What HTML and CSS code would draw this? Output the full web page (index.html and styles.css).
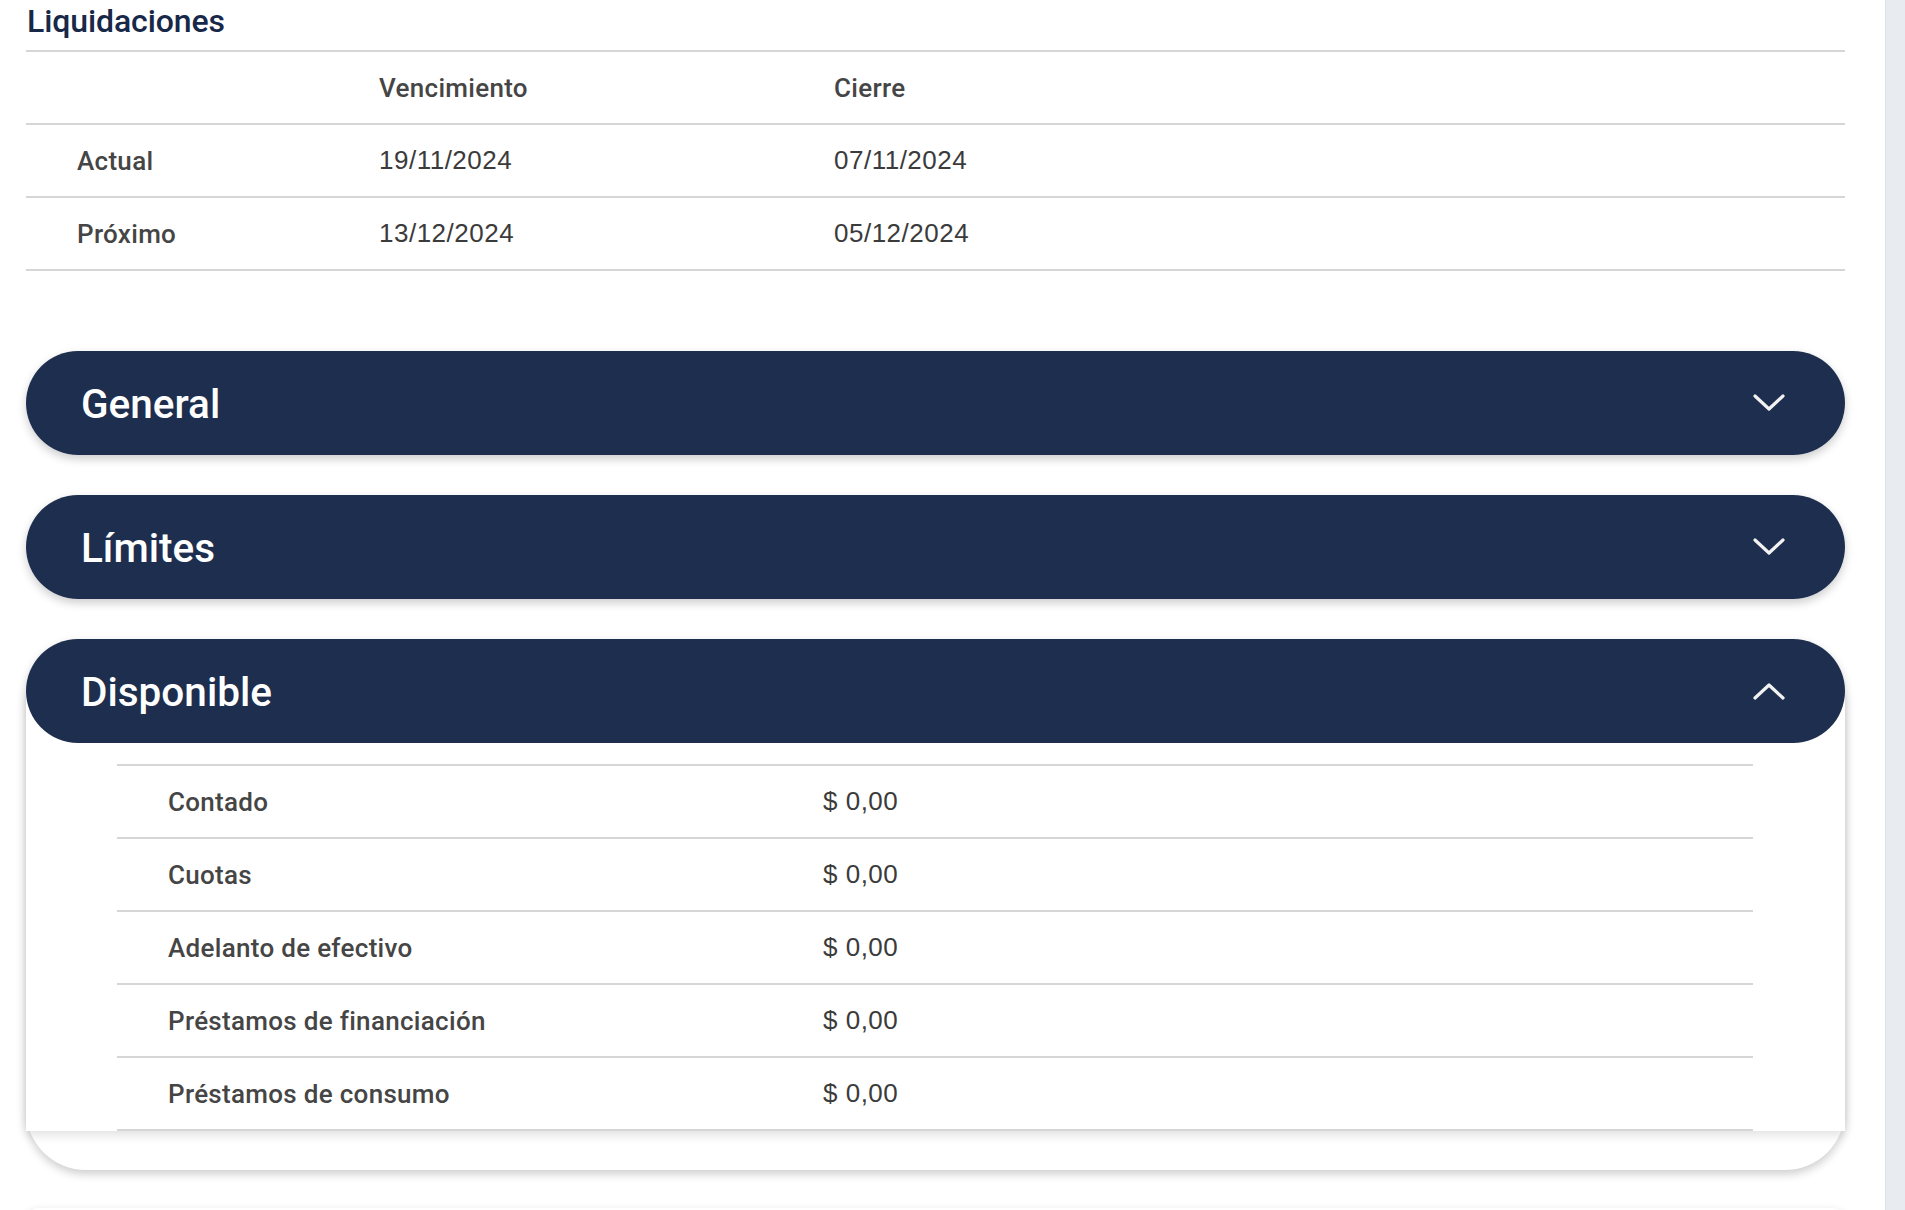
FILE: index.html
```html
<!DOCTYPE html>
<html lang="es">
<head>
<meta charset="utf-8">
<title>Liquidaciones</title>
<link rel="stylesheet" href="styles.css">
</head>
<body>
<div class="page">
  <main class="main">
    <h2 class="title">Liquidaciones</h2>
    <div class="liq-table">
      <div class="liq-row liq-head">
        <span class="cell label"></span>
        <span class="cell label">Vencimiento</span>
        <span class="cell label">Cierre</span>
      </div>
      <div class="liq-row">
        <span class="cell label">Actual</span>
        <span class="cell value">19/11/2024</span>
        <span class="cell value">07/11/2024</span>
      </div>
      <div class="liq-row">
        <span class="cell label">Próximo</span>
        <span class="cell value">13/12/2024</span>
        <span class="cell value">05/12/2024</span>
      </div>
    </div>

    <div class="accordions">
      <div class="acc">
        <div class="acc-head">
          <span class="acc-title">General</span>
          <svg class="chev" width="32" height="20" viewBox="0 0 32 20"><polyline points="2,3 16,16 30,3" fill="none" stroke="#f2f2f2" stroke-width="3.2" stroke-linecap="round" stroke-linejoin="round"/></svg>
        </div>
      </div>
      <div class="acc">
        <div class="acc-head">
          <span class="acc-title">Límites</span>
          <svg class="chev" width="32" height="20" viewBox="0 0 32 20"><polyline points="2,3 16,16 30,3" fill="none" stroke="#f2f2f2" stroke-width="3.2" stroke-linecap="round" stroke-linejoin="round"/></svg>
        </div>
      </div>
      <div class="acc acc-open">
        <div class="acc-head">
          <span class="acc-title">Disponible</span>
          <svg class="chev" width="32" height="20" viewBox="0 0 32 20"><polyline points="2,17 16,4 30,17" fill="none" stroke="#f2f2f2" stroke-width="3.2" stroke-linecap="round" stroke-linejoin="round"/></svg>
        </div>
        <div class="acc-body">
          <div class="disp-table">
            <div class="disp-row"><span class="cell label">Contado</span><span class="cell value">$ 0,00</span></div>
            <div class="disp-row"><span class="cell label">Cuotas</span><span class="cell value">$ 0,00</span></div>
            <div class="disp-row"><span class="cell label">Adelanto de efectivo</span><span class="cell value">$ 0,00</span></div>
            <div class="disp-row"><span class="cell label">Préstamos de financiación</span><span class="cell value">$ 0,00</span></div>
            <div class="disp-row"><span class="cell label">Préstamos de consumo</span><span class="cell value">$ 0,00</span></div>
          </div>
        </div>
      </div>
      <div class="acc next-card"></div>
    </div>
  </main>
  <aside class="rail"></aside>
</div>
</body>
</html>
```

FILE: styles.css
```css
html, body {
  margin: 0;
  padding: 0;
  background: #ffffff;
}

.page {
  display: flex;
  height: 100vh;
  overflow: hidden;
}

.main {
  flex: 1;
  padding: 0 40px 0 26px;
  min-width: 0;
}

.rail {
  width: 19px;
  flex: none;
  background: #e8ebef;
  border-left: 1px solid #dde1e6;
}

.title {
  margin: 0 0 9px 1px;
  padding-top: 1px;
  height: 40px;
  font-family: Roboto, "Noto Sans", sans-serif;
  font-weight: 500;
  font-size: 32px;
  line-height: 40px;
  color: #182848;
  letter-spacing: -0.1px;
}

.liq-table {
  border-bottom: 2px solid #d6d6d6;
}

.liq-row {
  display: grid;
  grid-template-columns: 353px 455px 1fr;
  height: 71px;
  align-items: center;
  border-top: 2px solid #d6d6d6;
}

.liq-row .cell:first-child {
  padding-left: 51px;
}

.cell.label {
  font-family: Roboto, "Noto Sans", sans-serif;
  font-weight: 500;
  font-size: 26px;
  letter-spacing: 0.3px;
  color: #454545;
}

.cell.value {
  font-family: "Liberation Sans", Arial, sans-serif;
  font-size: 26px;
  letter-spacing: 0.5px;
  color: #3b3b3b;
}

.accordions {
  margin-top: 80px;
  display: flex;
  flex-direction: column;
  gap: 40px;
}

.acc {
  border-radius: 52px;
  box-shadow: 0 4px 10px rgba(0, 0, 0, 0.2);
}

.acc-head {
  position: relative;
  z-index: 1;
  height: 104px;
  border-radius: 52px;
  background: #1e2e4f;
  display: flex;
  align-items: center;
  justify-content: space-between;
  padding: 0 60px 0 55px;
}

.acc-title {
  font-family: Roboto, "Noto Sans", sans-serif;
  font-weight: 500;
  font-size: 40.5px;
  color: #ffffff;
  letter-spacing: 0;
  padding-top: 2px;
}

.chev {
  display: block;
}

.acc-open {
  background: #ffffff;
  border-radius: 52px 52px 60px 60px;
  padding-bottom: 39px;
}

.acc-body {
  margin-top: -52px;
  padding: 73px 92px 0 91px;
  background: #ffffff;
  box-shadow: 0 4px 10px rgba(0, 0, 0, 0.12);
}

.disp-table {
  border-bottom: 2px solid #d6d6d6;
}

.disp-row {
  display: grid;
  grid-template-columns: 706px 1fr;
  height: 71px;
  align-items: center;
  border-top: 2px solid #d6d6d6;
}

.disp-row .cell:first-child {
  padding-left: 51px;
}

.next-card {
  margin-top: -2px;
  height: 80px;
  background: #ffffff;
  border-radius: 12px;
}
```
